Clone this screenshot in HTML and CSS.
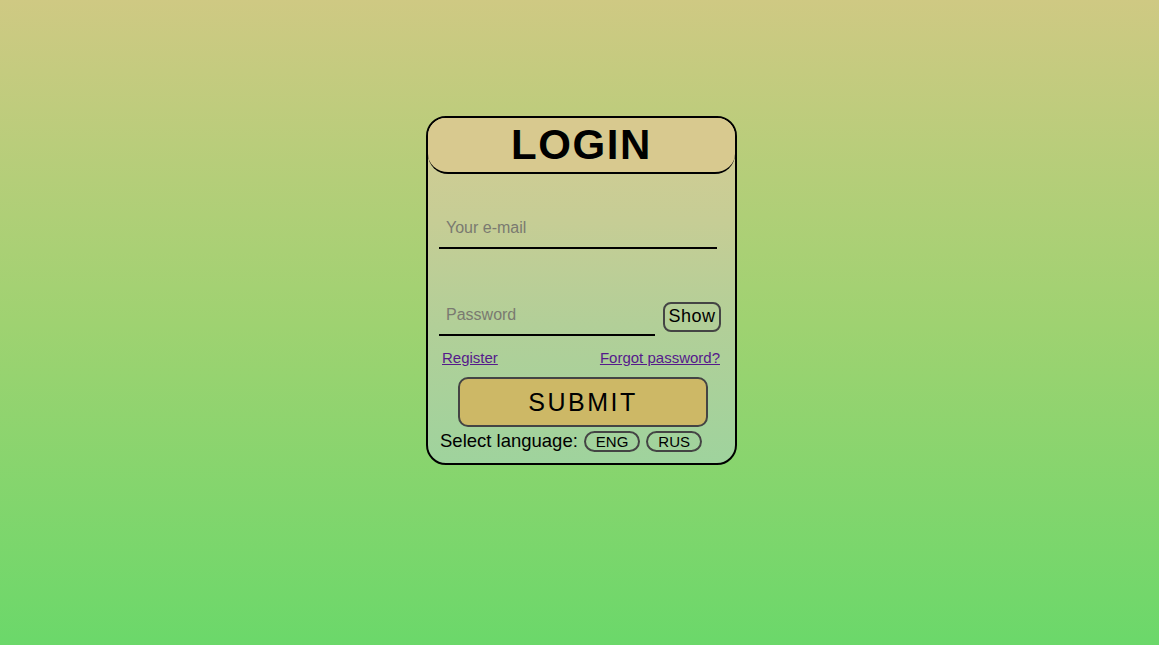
FILE: index.html
```html
<!DOCTYPE html>
<html lang="en">
<head>
<meta charset="utf-8">
<title>Login</title>
<link rel="stylesheet" href="styles.css">
</head>
<body>
<main class="page">
  <form class="card">
    <h1 class="title">LOGIN</h1>
    <div class="field email-field">
      <input class="input email" type="email" placeholder="Your e-mail">
    </div>
    <div class="field pass-field">
      <input class="input pass" type="password" placeholder="Password">
      <button type="button" class="show">Show</button>
    </div>
    <div class="links">
      <a href="#" class="link">Register</a>
      <a href="#" class="link">Forgot password?</a>
    </div>
    <div class="submit-row">
      <button type="button" class="submit">SUBMIT</button>
    </div>
    <div class="lang">
      <span class="lang-label">Select language:</span>
      <button type="button" class="lang-btn">ENG</button>
      <button type="button" class="lang-btn">RUS</button>
    </div>
  </form>
</main>
</body>
</html>
```
FILE: styles.css
```css
* { box-sizing: border-box; }
html, body { margin: 0; padding: 0; height: 100%; }
body {
  font-family: "Liberation Sans", Arial, sans-serif;
  background: linear-gradient(to bottom, #cfc983 0%, #9fd271 50%, #6bd86a 100%);
  min-height: 645px;
}
.page {
  display: flex;
  justify-content: center;
  padding-top: 116px;
  padding-left: 4px;
}
.card {
  width: 311px;
  height: 349px;
  border: 2px solid #000;
  border-radius: 20px;
  background: linear-gradient(to bottom, #d4cc93 0%, #c6cd95 30%, #b2cf98 60%, #9fd39d 100%);
  display: flex;
  flex-direction: column;
  overflow: hidden;
}
.title {
  margin: 0;
  height: 56px;
  background: #d8c98f;
  border-bottom: 2px solid #000;
  border-radius: 0 0 20px 20px;
  font-size: 42px;
  font-weight: bold;
  letter-spacing: 1.6px;
  text-align: center;
  line-height: 54px;
  padding-left: 0;
  color: #000;
}
.field {
  display: flex;
  align-items: flex-end;
  padding-left: 11px;
}
.email-field { margin-top: 37px; }
.pass-field { margin-top: 49px; }
.input {
  font-family: "Liberation Sans", Arial, sans-serif;
  font-size: 16px;
  border: none;
  border-bottom: 2px solid #000;
  background: transparent;
  padding: 0 7px 2px;
  height: 38px;
  outline: none;
  color: #000;
}
.input::placeholder { color: #7a7a70; }
.email { width: 278px; }
.pass { width: 216px; }
.show {
  margin-left: 8px;
  margin-bottom: 4px;
  width: 58px;
  height: 30px;
  border: 2px solid #444;
  border-radius: 8px;
  background: transparent;
  font-family: "Liberation Sans", Arial, sans-serif;
  font-size: 18px;
  letter-spacing: 0.5px;
  padding: 0 0 2px;
  color: #000;
}
.links {
  display: flex;
  justify-content: space-between;
  padding: 13px 15px 0 14px;
  font-size: 15px;
  line-height: 18px;
}
.link { color: #551a8b; }
.submit-row {
  display: flex;
  justify-content: center;
  margin-top: 10px;
  padding-left: 3px;
}
.submit {
  width: 250px;
  height: 50px;
  background: #cdb866;
  border: 2px solid #444;
  border-radius: 10px;
  font-family: "Liberation Sans", Arial, sans-serif;
  font-size: 25px;
  letter-spacing: 2.5px;
  color: #000;
  padding: 0;
}
.lang {
  display: flex;
  align-items: center;
  padding-left: 12px;
  margin-top: 3px;
  gap: 6px;
}
.lang-label { font-size: 18.5px; }
.lang-btn {
  height: 21px;
  padding: 0 10px;
  border: 2px solid #444;
  border-radius: 11px;
  background: transparent;
  font-family: "Liberation Sans", Arial, sans-serif;
  font-size: 15px;
  line-height: 17px;
  color: #000;
}
```
